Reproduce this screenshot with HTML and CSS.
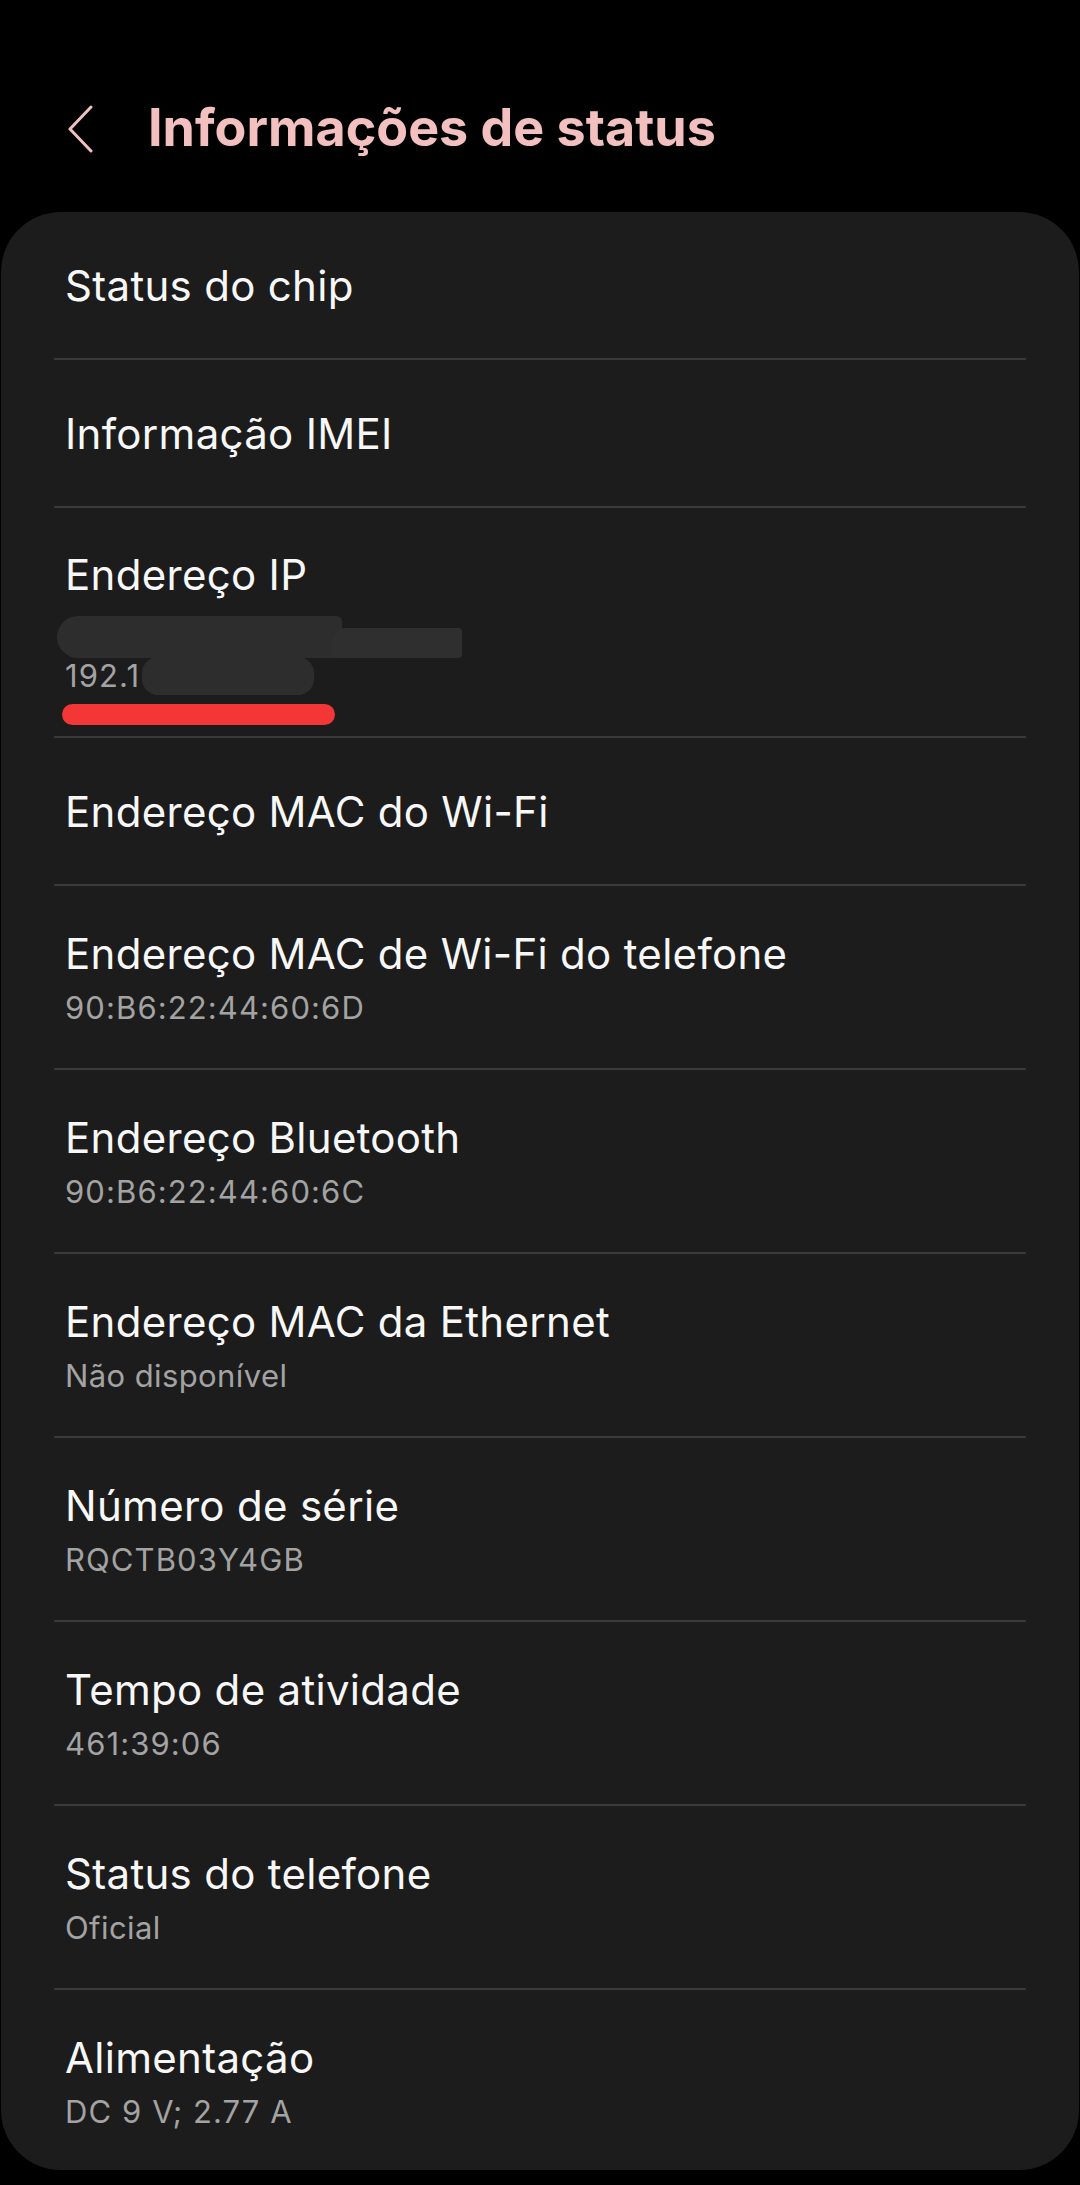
FILE: index.html
```html
<!DOCTYPE html>
<html lang="pt-BR">
<head>
<meta charset="utf-8">
<title>Informações de status</title>
<link rel="stylesheet" href="styles.css">
</head>
<body>
<div class="screen">
  <header class="appbar">
    <svg class="back" width="30" height="48" viewBox="0 0 30 48" aria-hidden="true">
      <path d="M25 2 L4 24 L25 46" fill="none" stroke="#f2c0c0" stroke-width="3" stroke-linecap="round" stroke-linejoin="round"/>
    </svg>
    <h1 class="title">Informações de status</h1>
  </header>

  <main class="card">
    <div class="row single"><div class="row-title">Status do chip</div></div>
    <div class="row single"><div class="row-title">Informação IMEI</div></div>
    <div class="row ip">
      <div class="row-title">Endereço IP</div>
      <div class="redact-line">
        <span class="blob blob-a"></span><span class="blob blob-b"></span>
      </div>
      <div class="row-sub ip-sub num">192.1<span class="blob blob-c"></span></div>
      <div class="red-stroke"></div>
    </div>
    <div class="row single"><div class="row-title">Endereço MAC do Wi-Fi</div></div>
    <div class="row double">
      <div class="row-title">Endereço MAC de Wi-Fi do telefone</div>
      <div class="row-sub num">90:B6:22:44:60:6D</div>
    </div>
    <div class="row double">
      <div class="row-title">Endereço Bluetooth</div>
      <div class="row-sub num">90:B6:22:44:60:6C</div>
    </div>
    <div class="row double">
      <div class="row-title">Endereço MAC da Ethernet</div>
      <div class="row-sub">Não disponível</div>
    </div>
    <div class="row double">
      <div class="row-title">Número de série</div>
      <div class="row-sub num">RQCTB03Y4GB</div>
    </div>
    <div class="row double">
      <div class="row-title">Tempo de atividade</div>
      <div class="row-sub num">461:39:06</div>
    </div>
    <div class="row double">
      <div class="row-title">Status do telefone</div>
      <div class="row-sub">Oficial</div>
    </div>
    <div class="row double last">
      <div class="row-title">Alimentação</div>
      <div class="row-sub num">DC 9 V; 2.77 A</div>
    </div>
  </main>
</div>
</body>
</html>
```

FILE: styles.css
```css
html, body {
  margin: 0;
  padding: 0;
  background: #000;
}

body {
  font-family: Inter, Roboto, "Noto Sans", "Liberation Sans", sans-serif;
  color: #f7f7f7;
  width: 1080px;
  height: 2185px;
  overflow: hidden;
}

.screen {
  display: flex;
  flex-direction: column;
}

.appbar {
  height: 212px;
  display: flex;
  align-items: center;
  box-sizing: border-box;
  padding: 44px 0 0 66px;
}

.back {
  flex: none;
  margin-top: 2px;
}

.title {
  margin: 0 0 0 52px;
  font-size: 52px;
  font-weight: 700;
  color: #f3c0c0;
  letter-spacing: 0;
  line-height: 1;
  margin-top: -1px;
}

.card {
  margin: 0 1px;
  background: #1c1c1c;
  border-radius: 60px;
  padding: 0 53px;
  display: flex;
  flex-direction: column;
}

.row {
  padding-left: 11px;
  border-bottom: 2px solid #393939;
}

.row.last {
  border-bottom: none;
}

.row.single {
  padding-top: 47px;
  padding-bottom: 45px;
}

.row.double {
  padding-top: 41px;
  padding-bottom: 33px;
}

.row.double.last {
  padding-bottom: 31px;
}

.row-title {
  font-size: 42px;
  line-height: 54px;
  letter-spacing: 0.3px;
  color: #f7f7f7;
}

.row-sub {
  font-size: 31px;
  line-height: 54px;
  letter-spacing: 0.4px;
  color: #a3a3a3;
}

.row-sub.num {
  letter-spacing: 1.1px;
}

.row.ip {
  padding-top: 40px;
  padding-bottom: 11px;
}

.redact-line {
  height: 50px;
  margin-top: 6px;
  display: flex;
  align-items: flex-end;
  margin-left: -8px;
}

.blob {
  display: inline-block;
  background: #2d2d2d;
}

.blob-a {
  width: 285px;
  height: 42px;
  border-radius: 21px 6px 6px 21px;
}

.blob-b {
  width: 130px;
  height: 30px;
  margin-left: -10px;
  border-radius: 14px 4px 4px 4px;
  background: #2f2f2f;
}

.ip-sub {
  line-height: 42px;
  margin-top: -3px;
  display: flex;
  align-items: center;
}

.blob-c {
  width: 172px;
  height: 38px;
  border-radius: 16px;
  margin-left: 2px;
}

.red-stroke {
  width: 273px;
  height: 21px;
  margin: 7px 0 0 -3px;
  border-radius: 11px;
  background: #f33636;
}
```
